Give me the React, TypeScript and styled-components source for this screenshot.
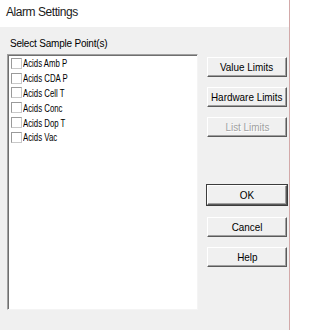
import React from "react";
import styled, { createGlobalStyle } from "styled-components";

const Global = createGlobalStyle`
  html, body { margin: 0; padding: 0; background: #ffffff; }
  body { width: 294px; height: 330px; overflow: hidden; }
  #root { width: 294px; height: 330px; }
`;

const Screen = styled.div`
  width: 294px;
  height: 330px;
  display: flex;
  background: #ffffff;
`;

const Window = styled.div`
  width: 289px;
  height: 330px;
  display: flex;
  flex-direction: column;
  border-right: 1px solid #d3a9a9;
`;

const TitleBar = styled.div`
  height: 27px;
  flex: none;
  display: flex;
  align-items: center;
  padding-left: 6px;
  padding-bottom: 3px;
  box-sizing: border-box;
  background: #ffffff;
  font-family: "Liberation Sans", Arial, sans-serif;
  font-size: 12px;
  letter-spacing: -0.45px;
  color: #1a1a1a;
`;

const Body = styled.div`
  flex: 1;
  background: #f0f0f0;
  display: flex;
  align-items: flex-start;
  padding: 10px 0 0 7px;
  gap: 9px;
`;

const LeftColumn = styled.div`
  display: flex;
  flex-direction: column;
`;

const GroupLabel = styled.div`
  height: 14px;
  line-height: 14px;
  padding-left: 3px;
  font-family: "Liberation Sans", Arial, sans-serif;
  font-size: 10px;
  letter-spacing: -0.2px;
  color: #000;
  margin-bottom: 3px;
`;

const ListBox = styled.div`
  width: 191px;
  height: 256px;
  box-sizing: border-box;
  background: #ffffff;
  border-top: 1px solid #a0a0a0;
  border-left: 1px solid #a0a0a0;
  border-right: 1px solid #f4f4f4;
  border-bottom: 1px solid #f4f4f4;
  box-shadow: inset 1px 1px 0 #6f6f6f;
  padding: 1px 0 0 3px;
  display: flex;
  flex-direction: column;
`;

const Item = styled.label`
  height: 14.8px;
  display: flex;
  align-items: center;
  gap: 1px;
  font-family: "Liberation Sans", Arial, sans-serif;
  font-size: 11px;
  color: #000;
  white-space: nowrap;
`;

const ItemText = styled.span`
  display: inline-block;
  transform: scaleX(0.71);
  transform-origin: left center;
`;

const Box = styled.span`
  width: 11px;
  height: 11px;
  box-sizing: border-box;
  background: #ffffff;
  border: 1px solid #9a9a9a;
  border-right-color: #c8c8c8;
  border-bottom-color: #c8c8c8;
  flex: none;
`;

const ButtonColumn = styled.div`
  display: flex;
  flex-direction: column;
  padding-top: 20px;
`;

const Button = styled.button<{ $default?: boolean; $gap?: number }>`
  width: 80px;
  height: 20px;
  margin-top: ${(p) => p.$gap ?? 0}px;
  box-sizing: border-box;
  padding: 0;
  background: #f0f0f0;
  border: 1px solid;
  border-color: #ffffff #5a5a5a #5a5a5a #ffffff;
  box-shadow: ${(p) =>
    p.$default
      ? "0 0 0 1px #3c3c3c, inset -1px -1px 0 #a0a0a0"
      : "inset -1px -1px 0 #a0a0a0"};
  font-family: "Liberation Sans", Arial, sans-serif;
  font-size: 11px;
  color: #000;
  white-space: nowrap;
  overflow: hidden;
  display: flex;
  align-items: center;
  justify-content: center;
  &:disabled {
    color: #a0a0a0;
    text-shadow: 1px 1px 0 #ffffff;
  }
`;

const ButtonText = styled.span`
  display: inline-block;
  transform: scaleX(0.9);
`;

const items = [
  "Acids Amb P",
  "Acids CDA P",
  "Acids Cell T",
  "Acids Conc",
  "Acids Dop T",
  "Acids Vac",
];

export default function App() {
  return (
    <>
      <Global />
      <Screen>
        <Window>
          <TitleBar>Alarm Settings</TitleBar>
          <Body>
            <LeftColumn>
              <GroupLabel>Select Sample Point(s)</GroupLabel>
              <ListBox>
                {items.map((name) => (
                  <Item key={name}>
                    <Box />
                    <ItemText>{name}</ItemText>
                  </Item>
                ))}
              </ListBox>
            </LeftColumn>
            <ButtonColumn>
              <Button>
                <ButtonText>Value Limits</ButtonText>
              </Button>
              <Button $gap={10}>
                <ButtonText>Hardware Limits</ButtonText>
              </Button>
              <Button $gap={10} disabled>
                <ButtonText>List Limits</ButtonText>
              </Button>
              <Button $gap={48} $default>
                <ButtonText>OK</ButtonText>
              </Button>
              <Button $gap={12}>
                <ButtonText>Cancel</ButtonText>
              </Button>
              <Button $gap={10}>
                <ButtonText>Help</ButtonText>
              </Button>
            </ButtonColumn>
          </Body>
        </Window>
      </Screen>
    </>
  );
}
